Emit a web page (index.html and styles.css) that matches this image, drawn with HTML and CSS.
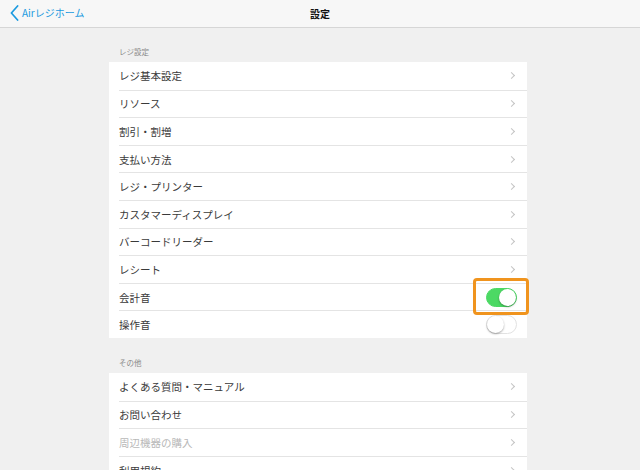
FILE: index.html
```html
<!DOCTYPE html>
<html lang="ja">
<head>
    <meta charset="UTF-8">
    <meta name="viewport" content="width=device-width, initial-scale=1.0">
    <title>設定</title>
    <link rel="stylesheet" href="styles.css">
</head>
<body>
    <div class="navbar">
        <a class="back" href="#">
            <svg class="back-icon" width="9" height="16" viewBox="0 0 9 16"><path d="M7.6 1 L1.4 8 L7.6 15" fill="none" stroke="#1a9ae0" stroke-width="1.7" stroke-linecap="round" stroke-linejoin="round"/></svg>
            <span>Airレジホーム</span>
        </a>
        <h1>設定</h1>
    </div>

    <div class="content">
        <div class="section first">
            <div class="section-title">レジ設定</div>
            <div class="card">
                <div class="row"><span>レジ基本設定</span><i class="chev"></i></div>
                <div class="row"><span>リソース</span><i class="chev"></i></div>
                <div class="row"><span>割引・割増</span><i class="chev"></i></div>
                <div class="row"><span>支払い方法</span><i class="chev"></i></div>
                <div class="row"><span>レジ・プリンター</span><i class="chev"></i></div>
                <div class="row"><span>カスタマーディスプレイ</span><i class="chev"></i></div>
                <div class="row"><span>バーコードリーダー</span><i class="chev"></i></div>
                <div class="row"><span>レシート</span><i class="chev"></i></div>
                <div class="row switch-row"><span>会計音</span><span class="toggle on highlight"></span></div>
                <div class="row switch-row"><span>操作音</span><span class="toggle"></span></div>
            </div>
        </div>

        <div class="section">
            <div class="section-title">その他</div>
            <div class="card">
                <div class="row"><span>よくある質問・マニュアル</span><i class="chev"></i></div>
                <div class="row"><span>お問い合わせ</span><i class="chev"></i></div>
                <div class="row disabled"><span>周辺機器の購入</span><i class="chev"></i></div>
                <div class="row"><span>利用規約</span><i class="chev"></i></div>
                <div class="row"><span>ライセンス</span><i class="chev"></i></div>
            </div>
        </div>
    </div>
</body>
</html>
```

FILE: styles.css
```css
body {
    margin: 0;
    padding: 0;
    background-color: #f0f0f0;
    font-family: "Noto Sans CJK JP", "Noto Sans", sans-serif;
    color: #3a3a3a;
    overflow: hidden;
}
.navbar {
    position: relative;
    height: 27px;
    background-color: #f7f7f7;
    border-bottom: 1px solid #d6d6d6;
    display: flex;
    align-items: center;
    justify-content: center;
}
.navbar h1 {
    margin: 0;
    font-size: 10px;
    font-weight: bold;
    color: #111;
}
.back {
    position: absolute;
    left: 10px;
    top: 5px;
    display: flex;
    align-items: center;
    gap: 3px;
    text-decoration: none;
    color: #1a9ae0;
    font-size: 10px;
    line-height: 16px;
}
.content {
    width: 418px;
    margin-left: 109px;
}
.section {
    margin-top: 19px;
}
.section.first {
    margin-top: 18px;
}
.section-title {
    padding-left: 10px;
    height: 12px;
    line-height: 12px;
    font-size: 7.5px;
    color: #888;
    margin-bottom: 4px;
}
.card {
    background: #fff;
    padding-left: 10px;
}
.row {
    box-sizing: border-box;
    height: 27.6px;
    display: flex;
    align-items: center;
    justify-content: space-between;
    padding-right: 12px;
    border-top: 1px solid #e4e4e4;
    font-size: 10.5px;
}
.row:first-child {
    border-top: none;
}
.row.disabled {
    color: #b8b8b8;
}
.switch-row {
    padding-right: 10px;
}
.chev {
    width: 4px;
    height: 4px;
    border-top: 1px solid #c4c4c4;
    border-right: 1px solid #c4c4c4;
    transform: rotate(45deg);
    margin-right: 1px;
}
.toggle {
    position: relative;
    box-sizing: border-box;
    width: 31px;
    height: 19px;
    border-radius: 10px;
    background: #fff;
    border: 1px solid #e2e2e2;
}
.toggle::after {
    content: "";
    position: absolute;
    top: 0;
    left: 0;
    width: 17px;
    height: 17px;
    border-radius: 50%;
    background: #fff;
    box-shadow: 0 1px 2px rgba(0, 0, 0, 0.35);
}
.toggle.on {
    background: #4cd964;
    border-color: #4cd964;
}
.toggle.on::after {
    left: 12px;
}
.highlight::before {
    content: "";
    position: absolute;
    top: -11px;
    left: -14px;
    right: -13px;
    bottom: -9px;
    border: 3px solid #f0941e;
    border-radius: 4px;
}
```
